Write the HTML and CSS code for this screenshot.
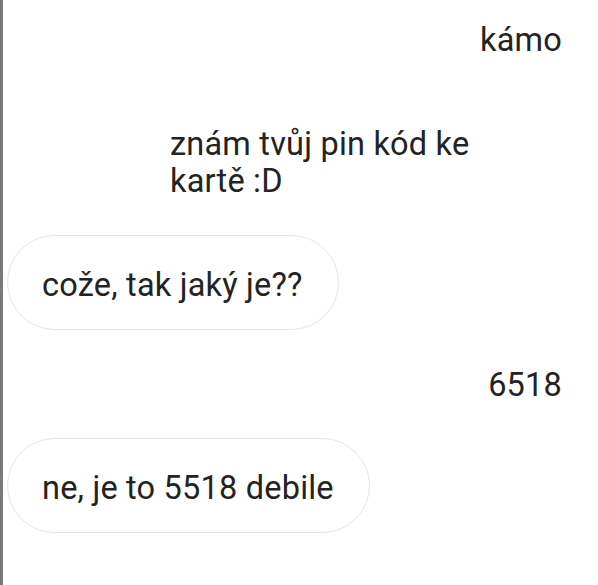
FILE: index.html
```html
<!DOCTYPE html>
<html lang="cs">
<head>
<meta charset="utf-8">
<title>Chat</title>
<link rel="stylesheet" href="styles.css">
</head>
<body>
<main class="chat">
  <div class="row sent first">
    <p class="msg">kámo</p>
  </div>
  <div class="row sent gap-lg">
    <p class="msg wide">znám tvůj pin kód ke<br>kartě :D</p>
  </div>
  <div class="row received gap-md">
    <p class="msg bubble">cože, tak jaký je??</p>
  </div>
  <div class="row sent gap-md2">
    <p class="msg">6518</p>
  </div>
  <div class="row received gap-sm">
    <p class="msg bubble">ne, je to 5518 debile</p>
  </div>
</main>
</body>
</html>
```

FILE: styles.css
```css
html, body {
  margin: 0;
  padding: 0;
  background: #ffffff;
}

.chat {
  box-sizing: border-box;
  width: 598px;
  height: 585px;
  border-left: 3px solid #7a7a7a;
  padding: 22px 36px 0 4px;
  display: flex;
  flex-direction: column;
  font-family: Roboto, "Noto Sans", sans-serif;
  font-size: 32.5px;
  letter-spacing: 0.2px;
  line-height: 37px;
  color: #232323;
}

.row {
  display: flex;
}

.row.sent {
  justify-content: flex-end;
}

.row.received {
  justify-content: flex-start;
}

.msg {
  margin: 0;
}

.wide {
  width: 392px;
}

.gap-lg { margin-top: 67px; }
.gap-md { margin-top: 35px; }
.gap-md2 { margin-top: 37px; }
.gap-sm { margin-top: 34px; }

.bubble {
  box-sizing: border-box;
  height: 95px;
  padding: 3px 35px 0 34px;
  line-height: 92px;
  border: 1px solid #e6e6e6;
  border-radius: 48px;
  background: #ffffff;
}
```
